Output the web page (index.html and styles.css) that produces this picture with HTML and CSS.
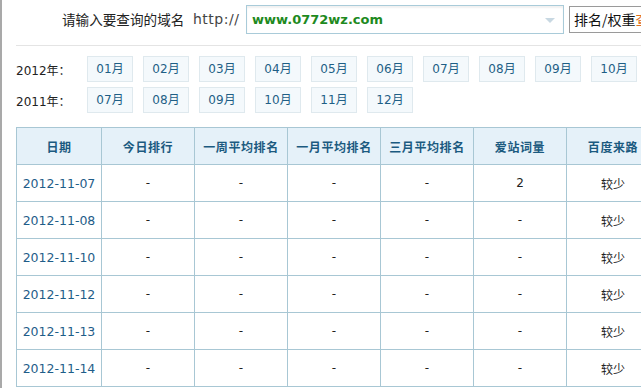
FILE: index.html
```html
<!DOCTYPE html>
<html lang="zh-CN">
<head>
<meta charset="utf-8">
<title>排名/权重查询</title>
<link rel="stylesheet" href="styles.css">
</head>
<body>
<div class="page">
  <div class="search">
    <span class="q-label">请输入要查询的域名</span>
    <span class="q-proto">http://</span>
    <div class="q-input">
      <span class="q-value">www.0772wz.com</span>
      <svg class="q-arrow" width="10" height="6" viewBox="0 0 10 6"><path d="M0 0 L10 0 L5 5 Z" fill="#c8d8e2"/></svg>
    </div>
    <div class="q-select">排名/权重<span class="q-more">查</span></div>
  </div>
  <div class="sep"></div>
  <div class="months">
    <div class="mrow">
      <span class="ylabel">2012年：</span>
      <a class="mbtn">01月</a><a class="mbtn">02月</a><a class="mbtn">03月</a><a class="mbtn">04月</a><a class="mbtn">05月</a><a class="mbtn">06月</a><a class="mbtn">07月</a><a class="mbtn">08月</a><a class="mbtn">09月</a><a class="mbtn">10月</a>
    </div>
    <div class="mrow">
      <span class="ylabel">2011年：</span>
      <a class="mbtn">07月</a><a class="mbtn">08月</a><a class="mbtn">09月</a><a class="mbtn">10月</a><a class="mbtn">11月</a><a class="mbtn">12月</a>
    </div>
  </div>
  <table class="data">
    <colgroup>
      <col class="c-date"><col class="c-n"><col class="c-n"><col class="c-n"><col class="c-n"><col class="c-n"><col class="c-n">
    </colgroup>
    <thead>
      <tr><th>日期</th><th>今日排行</th><th>一周平均排名</th><th>一月平均排名</th><th>三月平均排名</th><th>爱站词量</th><th>百度来路</th></tr>
    </thead>
    <tbody>
      <tr><td class="date">2012-11-07</td><td>-</td><td>-</td><td>-</td><td>-</td><td>2</td><td class="cn">较少</td></tr>
      <tr><td class="date">2012-11-08</td><td>-</td><td>-</td><td>-</td><td>-</td><td>-</td><td class="cn">较少</td></tr>
      <tr><td class="date">2012-11-10</td><td>-</td><td>-</td><td>-</td><td>-</td><td>-</td><td class="cn">较少</td></tr>
      <tr><td class="date">2012-11-12</td><td>-</td><td>-</td><td>-</td><td>-</td><td>-</td><td class="cn">较少</td></tr>
      <tr><td class="date">2012-11-13</td><td>-</td><td>-</td><td>-</td><td>-</td><td>-</td><td class="cn">较少</td></tr>
      <tr><td class="date">2012-11-14</td><td>-</td><td>-</td><td>-</td><td>-</td><td>-</td><td class="cn">较少</td></tr>
    </tbody>
  </table>
</div>
</body>
</html>
```
FILE: styles.css
```css
html, body {
  margin: 0;
  padding: 0;
  background: #fff;
}
.page {
  width: 641px;
  height: 388px;
  overflow: hidden;
  box-sizing: border-box;
  border-left: 2px solid #a9a9a9;
  font-family: "DejaVu Sans", "Noto Sans CJK SC", sans-serif;
  color: #222;
}
.search {
  display: flex;
  align-items: flex-start;
  height: 45px;
  padding-left: 60px;
  box-sizing: border-box;
}
.search > * {
  flex: none;
}
.q-label {
  width: 131px;
  margin-top: 9px;
  font-family: "Noto Sans CJK SC", sans-serif;
  font-size: 13.6px;
  line-height: 20px;
  color: #222;
}
.q-proto {
  width: 53px;
  margin-top: 9px;
  font-size: 14px;
  line-height: 20px;
  color: #444;
  letter-spacing: 0.5px;
}
.q-input {
  margin-top: 5px;
  width: 318px;
  height: 29px;
  box-sizing: border-box;
  border: 1px solid #a9cbd9;
  box-shadow: inset 0 2px 2px rgba(0, 0, 0, 0.06);
  display: flex;
  align-items: center;
  justify-content: space-between;
  padding: 0 8px 0 5px;
}
.q-value {
  font-weight: bold;
  font-size: 13px;
  color: #1e8a1e;
}
.q-arrow {
  margin-top: 3px;
}
.q-select {
  margin-top: 6px;
  margin-left: 5px;
  height: 27px;
  box-sizing: border-box;
  border: 1px solid #9a9a9a;
  padding: 0 0 0 4px;
  font-family: "Noto Sans CJK SC", sans-serif;
  font-size: 14px;
  line-height: 24px;
  color: #111;
  white-space: nowrap;
}
.q-more {
  color: #e07020;
}
.sep {
  margin-left: 14px;
  border-top: 1px solid #e4e4e4;
}
.months {
  padding: 10px 0 0 14px;
}
.mrow {
  display: flex;
  gap: 10px;
  height: 26px;
  margin-bottom: 5px;
  align-items: center;
}
.ylabel {
  width: 61px;
  font-size: 12px;
  color: #222;
}
.mbtn {
  flex: none;
  width: 46px;
  height: 26px;
  box-sizing: border-box;
  border: 1px solid #dfe9ee;
  background: #f4f9fc;
  color: #1e5f86;
  font-size: 12px;
  line-height: 24px;
  text-align: center;
}
.data {
  margin-top: 14px;
  margin-left: 14px;
  border-collapse: collapse;
  table-layout: fixed;
  width: 644px;
  font-size: 12px;
}
.c-date { width: 85px; }
.c-n { width: 93px; }
.data th, .data td {
  border: 1px solid #a8c7d4;
  height: 37px;
  padding: 0;
  text-align: center;
  box-sizing: border-box;
}
.data th {
  background: #e5f1f9;
  color: #1b5a80;
  font-family: "Noto Sans CJK SC", sans-serif;
  font-weight: bold;
  letter-spacing: 0.6px;
}
.data td {
  color: #222;
}
.data td.date {
  color: #1f5d89;
  font-size: 12.5px;
}
.data td.cn {
  font-family: "Noto Sans CJK SC", sans-serif;
}
```
